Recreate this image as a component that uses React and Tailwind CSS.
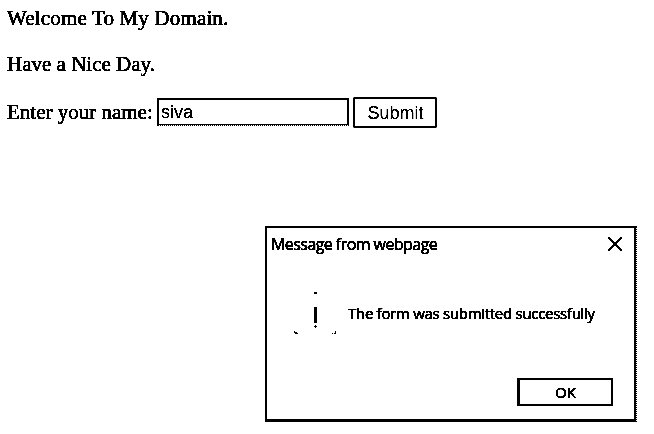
function TextLine({ children, className = "" }) {
  return <p className={"h-6 whitespace-nowrap text-[21px] leading-6 " + className}>{children}</p>;
}

function NameForm() {
  return (
    <form className="mt-[21px] flex h-[31px] items-start" onSubmit={(e) => e.preventDefault()}>
      <label htmlFor="name" className="mt-[3px] w-[150px] shrink-0 whitespace-nowrap text-[21px] leading-6">
        Enter your name:
      </label>
      <div className="mt-px h-[28px] w-[192px] shrink-0 border-b border-dotted border-black">
        <input
          id="name"
          defaultValue="siva"
          className="block h-[27px] w-full border-2 border-b border-black px-[2px] pt-px font-['Liberation_Sans',Arial,sans-serif] text-[18px] leading-6 outline-none [-webkit-text-stroke:0]"
        />
      </div>
      <button className="ml-1 h-[31px] w-[84px] rounded-[2px] border-2 border-black pl-px font-['Liberation_Sans',Arial,sans-serif] text-[18px] leading-[26px] [-webkit-text-stroke:0]">
        Submit
      </button>
    </form>
  );
}

function WarningIcon() {
  return (
    <svg width="44" height="44" viewBox="0 0 44 44" fill="black" shapeRendering="crispEdges">
      <path d="M22 2h3v2h-3zM22 17h3v16h-3zM23 35h1v3h-1zM22 36h3v1h-3zM2 41h1v1h2v1h1v1H3v-1H2zM40 43h1v1h-1zM42 43h1v-2h1v3h-2z" />
    </svg>
  );
}

function Dialog() {
  return (
    <section className="ml-[258px] mt-[98px] flex h-[196px] w-[372px] flex-col border-r border-dotted border-black font-['Open_Sans','Noto_Sans',sans-serif]">
      <div className="flex grow flex-col border-2 border-b-[3px] border-solid border-black">
        <header className="flex h-[32px] items-center justify-between pl-1 pr-3">
          <h1 className="whitespace-nowrap text-[16px] leading-8 tracking-[-0.56px]">Message from webpage</h1>
          <svg width="14" height="14" viewBox="0 0 14 14" fill="none" stroke="black" strokeWidth="1.6">
            <path d="M.5.5l13 13M13.5.5l-13 13" />
          </svg>
        </header>
        <div className="mt-[30px] flex h-[44px] pl-[25px]">
          <WarningIcon />
          <p className="ml-[12px] mt-[11px] whitespace-nowrap text-[15px] leading-6 tracking-[-0.29px]">
            The form was submitted successfully
          </p>
        </div>
        <button className="ml-[250px] mt-[44px] h-[28px] w-[96px] shrink-0 border-2 border-l-[3px] border-black text-[15px] leading-6">
          OK
        </button>
      </div>
    </section>
  );
}

export default function App() {
  return (
    <main className="h-[434px] w-[654px] overflow-hidden bg-white pl-[7px] pt-[6px] font-['Liberation_Serif','Times_New_Roman',serif] text-black brightness-75 contrast-[12] grayscale [-webkit-text-stroke:0.3px_black]">
      <TextLine className="tracking-[0.16px]">Welcome To My Domain.</TextLine>
      <div className="mt-[22px]">
        <TextLine>Have a Nice Day.</TextLine>
      </div>
      <NameForm />
      <Dialog />
    </main>
  );
}
